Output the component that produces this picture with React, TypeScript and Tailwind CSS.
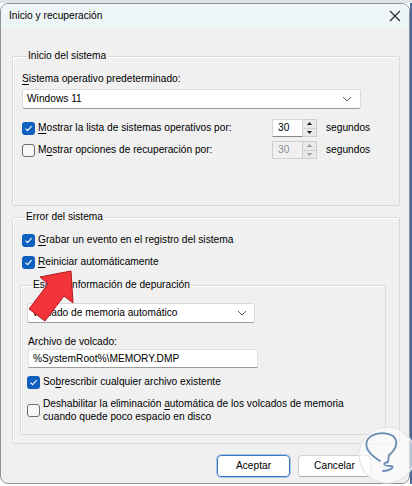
import React from "react";

const Check = ({ on }: { on?: boolean }) =>
  on ? (
    <span className="w-[13px] h-[13px] rounded-[3px] bg-[#0f5fbf] flex items-center justify-center shrink-0">
      <svg width="9" height="9" viewBox="0 0 9 9">
        <path d="M1.5 4.6 L3.6 6.6 L7.6 2.2" fill="none" stroke="#fff" strokeWidth="1.1" />
      </svg>
    </span>
  ) : (
    <span className="w-[13px] h-[13px] rounded-[3px] border border-[#6d6d6d] bg-[#f7f7f7] shrink-0" />
  );

const Key = ({ children }: { children: React.ReactNode }) => (
  <span className="underline underline-offset-[2px] decoration-[1px]">{children}</span>
);

const Chevron = () => (
  <svg width="10" height="6" viewBox="0 0 10 6">
    <path d="M1 1 L5 5 L9 1" fill="none" stroke="#5c5c5c" strokeWidth="1" />
  </svg>
);

const Spin = ({ disabled }: { disabled?: boolean }) => {
  const glyph = disabled ? "#9a9a9a" : "#1a1a1a";
  return (
    <div className="flex h-[18px]">
      <div
        className={
          disabled
            ? "w-[31px] h-full border border-[#cfcfcf] bg-[#f0f0f0] text-[#8d8d8d] flex items-center pl-[5px]"
            : "w-[31px] h-full border border-[#d6d6d6] border-b-[#8a8a8a] bg-white flex items-center pl-[5px]"
        }
      >
        30
      </div>
      <div className="w-[14px] h-full flex flex-col border border-l-0 border-[#cfcfcf] bg-[#e9e9e9]">
        <div className="flex-1 flex items-center justify-center border-b border-[#cfcfcf]">
          <svg width="5" height="3" viewBox="0 0 5 3">
            <path d="M0 3 L2.5 0 L5 3 Z" fill={glyph} />
          </svg>
        </div>
        <div className="flex-1 flex items-center justify-center">
          <svg width="5" height="3" viewBox="0 0 5 3">
            <path d="M0 0 L2.5 3 L5 0 Z" fill={glyph} />
          </svg>
        </div>
      </div>
    </div>
  );
};

const SpinRow = ({ on, disabled, children }: any) => (
  <div className="flex items-center h-[18px]">
    <div className="w-[250px] flex items-center gap-[3px]">
      <Check on={on} />
      <span>{children}</span>
    </div>
    <Spin disabled={disabled} />
    <span className="ml-[9px]">segundos</span>
  </div>
);

const CheckRow = ({ on, children, className = "" }: any) => (
  <div className={`flex items-center gap-[3px] h-[16px] ${className}`}>
    <Check on={on} />
    <span>{children}</span>
  </div>
);

export default function App() {
  return (
    <div className="w-[412px] h-[486px] bg-white relative overflow-hidden font-['Liberation_Sans',Arial,sans-serif] text-[10.2px] leading-[16px] text-black">
      <div className="h-[3px] bg-[#dfe3e6]" />
      <div className="flex">
        <div className="w-[410px] h-[481px] rounded-[8px] border border-[#8f9396] bg-[#f0f0f0] overflow-hidden flex flex-col">
          {/* title bar */}
          <div className="h-[24px] bg-[#eef5f6] flex items-center justify-between pl-[8px] pr-[8px]">
            <span>Inicio y recuperación</span>
            <svg width="12" height="12" viewBox="0 0 12 12">
              <path d="M1 1 L11 11 M11 1 L1 11" stroke="#222" strokeWidth="1.1" />
            </svg>
          </div>

          <div className="flex-1 pl-[11px] pr-[9px] pt-[20px] flex flex-col">
            {/* Inicio del sistema */}
            <fieldset className="border border-[#d9d9d9] rounded-[2px] pl-[9px] pb-[46px] shadow-[inset_1px_1px_0_#fff]">
              <legend className="ml-[5px] px-[1px]">Inicio del sistema</legend>
              <div className="pt-[7px]">
                <Key>S</Key>istema operativo predeterminado:
              </div>
              <div className="mt-[2px] w-[339px] h-[20px] bg-white border border-[#dadada] border-b-[#9a9a9a] rounded-[3px] flex items-center justify-between pl-[4px] pr-[8px]">
                <span>Windows 11</span>
                <Chevron />
              </div>
              <div className="mt-[10px] flex flex-col gap-[4px]">
                <SpinRow on>
                  <Key>M</Key>ostrar la lista de sistemas operativos por:
                </SpinRow>
                <SpinRow disabled>
                  M<Key>o</Key>strar opciones de recuperación por:
                </SpinRow>
              </div>
            </fieldset>

            {/* Error del sistema */}
            <fieldset className="mt-[3px] border border-[#d9d9d9] rounded-[2px] pl-[7px] pr-[13px] pb-[8px] shadow-[inset_1px_1px_0_#fff]">
              <legend className="ml-[5px] px-[1px]">Error del sistema</legend>
              <CheckRow on className="mt-[7px] ml-[2px]">
                <Key>G</Key>rabar un evento en el registro del sistema
              </CheckRow>
              <CheckRow on className="mt-[6px] ml-[2px]">
                <Key>R</Key>einiciar automáticamente
              </CheckRow>

              <fieldset className="mt-[7px] border border-[#d9d9d9] rounded-[2px] pl-[6px] pb-[11px] shadow-[inset_1px_1px_0_#fff]">
                <legend className="ml-[5px] px-[1px]">Escribir información de depuración</legend>
                <div className="mt-[10px] w-[228px] h-[20px] bg-white border border-[#dadada] border-b-[#9a9a9a] rounded-[3px] flex items-center justify-between pl-[4px] pr-[7px]">
                  <span>Volcado de memoria automático</span>
                  <Chevron />
                </div>
                <div className="mt-[11px] ml-[1px]">Archivo de volcado:</div>
                <div className="ml-[1px] -mt-[1px] w-[230px] h-[19px] bg-white border border-[#e2e2e2] border-b-[#9a9a9a] flex items-center pl-[4px]">
                  %SystemRoot%\MEMORY.DMP
                </div>
                <CheckRow on className="mt-[6px]">
                  So<Key>b</Key>rescribir cualquier archivo existente
                </CheckRow>
                <div className="mt-[7px] flex items-center gap-[3px]">
                  <Check />
                  <span className="leading-[13px]">
                    Deshabilitar la eliminación <Key>a</Key>utomática de los volcados de memoria
                    <br />
                    cuando quede poco espacio en disco
                  </span>
                </div>
              </fieldset>
            </fieldset>

            {/* buttons */}
            <div className="mt-[11px] flex justify-end gap-[8px] pr-[29px]">
              <button className="w-[73px] h-[22px] bg-white border border-[#3b78c4] rounded-[4px] outline outline-1 outline-[#a9c4e6]">
                Aceptar
              </button>
              <button className="w-[73px] h-[22px] bg-white border border-[#d0d0d0] border-b-[#a8a8a8] rounded-[4px]">
                Cancelar
              </button>
            </div>
          </div>
        </div>
        <div className="flex-1 h-[481px] bg-[#48699a]" />
      </div>

      {/* red arrow annotation */}
      <svg width="412" height="486" className="absolute left-0 top-0 pointer-events-none">
        <polygon
          points="71,271 73,303 64,296 45,321 29,309 48,284 40,277"
          fill="#f2343a"
          stroke="#b4161c"
          strokeWidth="1"
          strokeLinejoin="round"
        />
        {/* watermark */}
        <circle cx="387" cy="455" r="28" fill="#ffffff" fillOpacity="0.6" stroke="#e4e8ec" strokeWidth="1.5" />
        <path
          d="M380 461 C372 456 364 449 367 441 C370 433 385 431 393 436 C399 441 396 450 389 455 L388 462 C383 463 382 466 391 466 C396 467 389 471 383 471"
          fill="none"
          stroke="#6c8db6"
          strokeWidth="1.8"
          strokeLinecap="round"
        />
      </svg>
    </div>
  );
}
